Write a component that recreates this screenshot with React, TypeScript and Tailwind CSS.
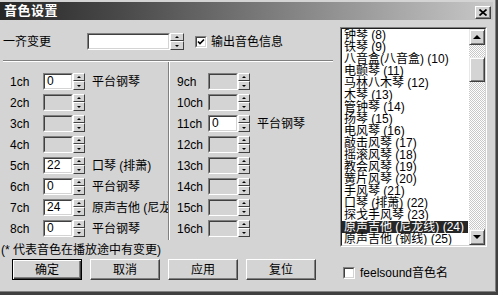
import React from "react";

function Spin({ wide }: { wide?: boolean }) {
  return (
    <div className={`flex flex-col h-[17px] shrink-0 ${wide ? "w-[14px]" : "w-[12px]"}`}>
      <div className="h-[8px] bg-[#d4d4d4] border border-t-white border-l-white border-r-[#404040] border-b-[#404040] flex items-center justify-center">
        <div className="w-0 h-0 border-x-[2px] border-x-transparent border-b-[2px] border-b-black" />
      </div>
      <div className="h-[9px] bg-[#d4d4d4] border border-t-white border-l-white border-r-[#404040] border-b-[#404040] flex items-center justify-center">
        <div className="w-0 h-0 border-x-[2px] border-x-transparent border-t-[2px] border-t-black" />
      </div>
    </div>
  );
}

function Field({ value, w }: { value?: string; w: string }) {
  const on = value !== undefined;
  return (
    <div
      className={`h-[17px] shrink-0 ${w} ${on ? "bg-white" : "bg-[#d4d4d4]"} border border-t-[#808080] border-l-[#808080] border-r-white border-b-white`}
    >
      <div className="h-full border border-t-[#404040] border-l-[#404040] border-r-[#d4d4d4] border-b-[#d4d4d4] text-[12px] leading-[13px] pl-[2px] text-black">
        {value}
      </div>
    </div>
  );
}

function Check({ checked, extra }: { checked?: boolean; extra: string }) {
  return (
    <div
      className={`w-[12px] h-[12px] shrink-0 bg-white border border-t-[#808080] border-l-[#808080] border-r-white border-b-white ${extra}`}
    >
      <div className="w-full h-full border border-t-[#404040] border-l-[#404040] border-r-[#d4d4d4] border-b-[#d4d4d4] flex items-center justify-center">
        {checked && (
          <svg width="8" height="8" viewBox="0 0 8 8">
            <path d="M1 3.5 L3 5.5 L7 1.5" stroke="black" strokeWidth="1.6" fill="none" />
          </svg>
        )}
      </div>
    </div>
  );
}

type Ch = { ch: string; v?: string; t?: string };

const leftRows: Ch[] = [
  { ch: "1ch", v: "0", t: "平台钢琴" },
  { ch: "2ch" },
  { ch: "3ch" },
  { ch: "4ch" },
  { ch: "5ch", v: "22", t: "口琴 (排萧)" },
  { ch: "6ch", v: "0", t: "平台钢琴" },
  { ch: "7ch", v: "24", t: "原声吉他 (尼龙线)" },
  { ch: "8ch", v: "0", t: "平台钢琴" },
];

const rightRows: Ch[] = [
  { ch: "9ch" },
  { ch: "10ch" },
  { ch: "11ch", v: "0", t: "平台钢琴" },
  { ch: "12ch" },
  { ch: "13ch" },
  { ch: "14ch" },
  { ch: "15ch" },
  { ch: "16ch" },
];

const items = [
  "钟琴 (8)",
  "铁琴 (9)",
  "八音盒(八音盒) (10)",
  "电颤琴 (11)",
  "马林八木琴 (12)",
  "木琴 (13)",
  "管钟琴 (14)",
  "扬琴 (15)",
  "电风琴 (16)",
  "敲击风琴 (17)",
  "摇滚风琴 (18)",
  "教会风琴 (19)",
  "簧片风琴 (20)",
  "手风琴 (21)",
  "口琴 (排萧) (22)",
  "探戈手风琴 (23)",
  "原声吉他 (尼龙线) (24)",
  "原声吉他 (钢线) (25)",
];

function ScrollBtn({ up }: { up?: boolean }) {
  return (
    <div className="h-[16px] shrink-0 bg-[#d4d4d4] border border-t-[#e8e8e8] border-l-[#e8e8e8] border-r-[#404040] border-b-[#404040] shadow-[inset_1px_1px_0_#ffffff,inset_-1px_-1px_0_#808080] flex items-center justify-center">
      {up ? (
        <div className="w-0 h-0 border-x-[4px] border-x-transparent border-b-[4px] border-b-black" />
      ) : (
        <div className="w-0 h-0 border-x-[4px] border-x-transparent border-t-[4px] border-t-black" />
      )}
    </div>
  );
}

const btn =
  "w-[70px] h-[21px] bg-[#d4d4d4] border border-t-white border-l-white border-r-[#404040] border-b-[#404040] shadow-[inset_-1px_-1px_0_#808080] flex items-center justify-center text-[12px] leading-[14px] text-black";

export default function App() {
  return (
    <div className="w-[498px] h-[295px] overflow-hidden bg-[#d4d4d4] border-r-[2px] border-b-[3px] border-r-[#404040] border-b-[#404040] font-['Liberation_Sans','Noto_Sans_CJK_SC',sans-serif] text-black">
      <div className="w-full h-full border-r border-b border-r-[#808080] border-b-[#808080] pt-[2px] flex flex-col">
        {/* title bar */}
        <div className="h-[18px] mr-[2px] shrink-0 bg-[linear-gradient(to_right,#262626,#4a4a4a_25%,#c8c8c8)] flex items-center justify-between pl-[4px] pr-[2px]">
          <span className="text-white font-bold text-[13px] leading-[16px] tracking-[0.5px]">音色设置</span>
          <div className="w-[16px] h-[13px] mt-[2px] bg-[#d4d4d4] border border-t-white border-l-white border-r-[#404040] border-b-[#404040] shadow-[inset_-1px_-1px_0_#808080] flex items-center justify-center">
            <svg width="8" height="7" viewBox="0 0 8 7">
              <path d="M0.5 0.5 L7.5 6.5 M7.5 0.5 L0.5 6.5" stroke="black" strokeWidth="1.7" />
            </svg>
          </div>
        </div>

        {/* main */}
        <div className="flex shrink-0">
          {/* left panel */}
          <div className="w-[335px] flex flex-col shrink-0">
            <div className="flex items-center mt-[13px] h-[17px]">
              <span className="w-[87px] pl-[3px] text-[12px] leading-[14px] shrink-0">一齐变更</span>
              <Field w="w-[83px]" value="" />
              <Spin wide />
              <Check checked extra="ml-[11px]" />
              <span className="ml-[4px] text-[12px] leading-[14px] whitespace-nowrap">输出音色信息</span>
            </div>
            <div className="mt-[10px] ml-[3px] w-[330px] h-[2px] border-t border-t-[#808080] border-b border-b-white" />
            <div className="flex">
              <div className="w-[168px] overflow-hidden pl-[10px] pt-[11px] pb-[3px] flex flex-col gap-[4px] shrink-0">
                {leftRows.map((r) => (
                  <div key={r.ch} className="flex items-center h-[17px]">
                    <span className="w-[33px] shrink-0 text-[12px] leading-[14px]">{r.ch}</span>
                    <Field w="w-[30px]" value={r.v} />
                    <Spin />
                    {r.t && (
                      <span className="ml-[7px] flex-1 min-w-0 overflow-hidden text-[12px] leading-[14px] whitespace-nowrap">
                        {r.t}
                      </span>
                    )}
                  </div>
                ))}
              </div>
              <div className="w-[2px] shrink-0 border-l border-l-[#808080] border-r border-r-white" />
              <div className="flex-1 pl-[7px] pt-[11px] flex flex-col gap-[4px]">
                {rightRows.map((r) => (
                  <div key={r.ch} className="flex items-center h-[17px]">
                    <span className="w-[31px] shrink-0 text-[12px] leading-[14px]">{r.ch}</span>
                    <Field w="w-[30px]" value={r.v} />
                    <Spin />
                    {r.t && (
                      <span className="ml-[7px] text-[12px] leading-[14px] whitespace-nowrap">{r.t}</span>
                    )}
                  </div>
                ))}
              </div>
            </div>
            <div className="mt-[3px] pl-[1px] text-[12px] leading-[14px] whitespace-nowrap">
              (* 代表音色在播放途中有变更)
            </div>
          </div>

          {/* list box */}
          <div className="ml-[5px] mt-[7px] w-[147px] h-[220px] shrink-0 border border-t-[#808080] border-l-[#808080] border-r-white border-b-white">
            <div className="w-full h-full border border-t-[#202020] border-l-[#202020] border-r-[#d4d4d4] border-b-[#d4d4d4] flex bg-white">
              <div className="flex-1 overflow-hidden flex flex-col">
                {items.map((it, i) => (
                  <div
                    key={it}
                    className={`h-[12px] shrink-0 pl-[2px] text-[12px] leading-[12px] whitespace-nowrap ${
                      i === 16 ? "bg-[#262626] text-white mr-[1px]" : "text-black"
                    }`}
                  >
                    {it}
                  </div>
                ))}
              </div>
              <div className="w-[16px] shrink-0 flex flex-col bg-[image:repeating-conic-gradient(#ffffff_0%_25%,#c8c8c8_0%_50%)] bg-[length:2px_2px]">
                <ScrollBtn up />
                <div className="h-[12px] shrink-0" />
                <div className="h-[25px] shrink-0 bg-[#d4d4d4] border border-t-[#e8e8e8] border-l-[#e8e8e8] border-r-[#404040] border-b-[#404040] shadow-[inset_1px_1px_0_#ffffff,inset_-1px_-1px_0_#808080]" />
                <div className="flex-1" />
                <ScrollBtn />
              </div>
            </div>
          </div>
        </div>

        {/* buttons */}
        <div className="flex items-start mt-[2px] pl-[12px] gap-[8px] shrink-0">
          <div className="w-[70px] h-[21px] bg-[#d4d4d4] border border-black shadow-[inset_1px_1px_0_#ffffff,inset_-1px_-1px_0_#404040,inset_-2px_-2px_0_#808080] flex items-center justify-center text-[12px] leading-[14px]">
            确定
          </div>
          <div className={btn}>取消</div>
          <div className={btn}>应用</div>
          <div className={btn}>复位</div>
          <div className="flex items-center ml-[19px] mt-[7px]">
            <Check extra="" />
            <span className="ml-[5px] text-[12px] leading-[14px] whitespace-nowrap">feelsound音色名</span>
          </div>
        </div>
      </div>
    </div>
  );
}
